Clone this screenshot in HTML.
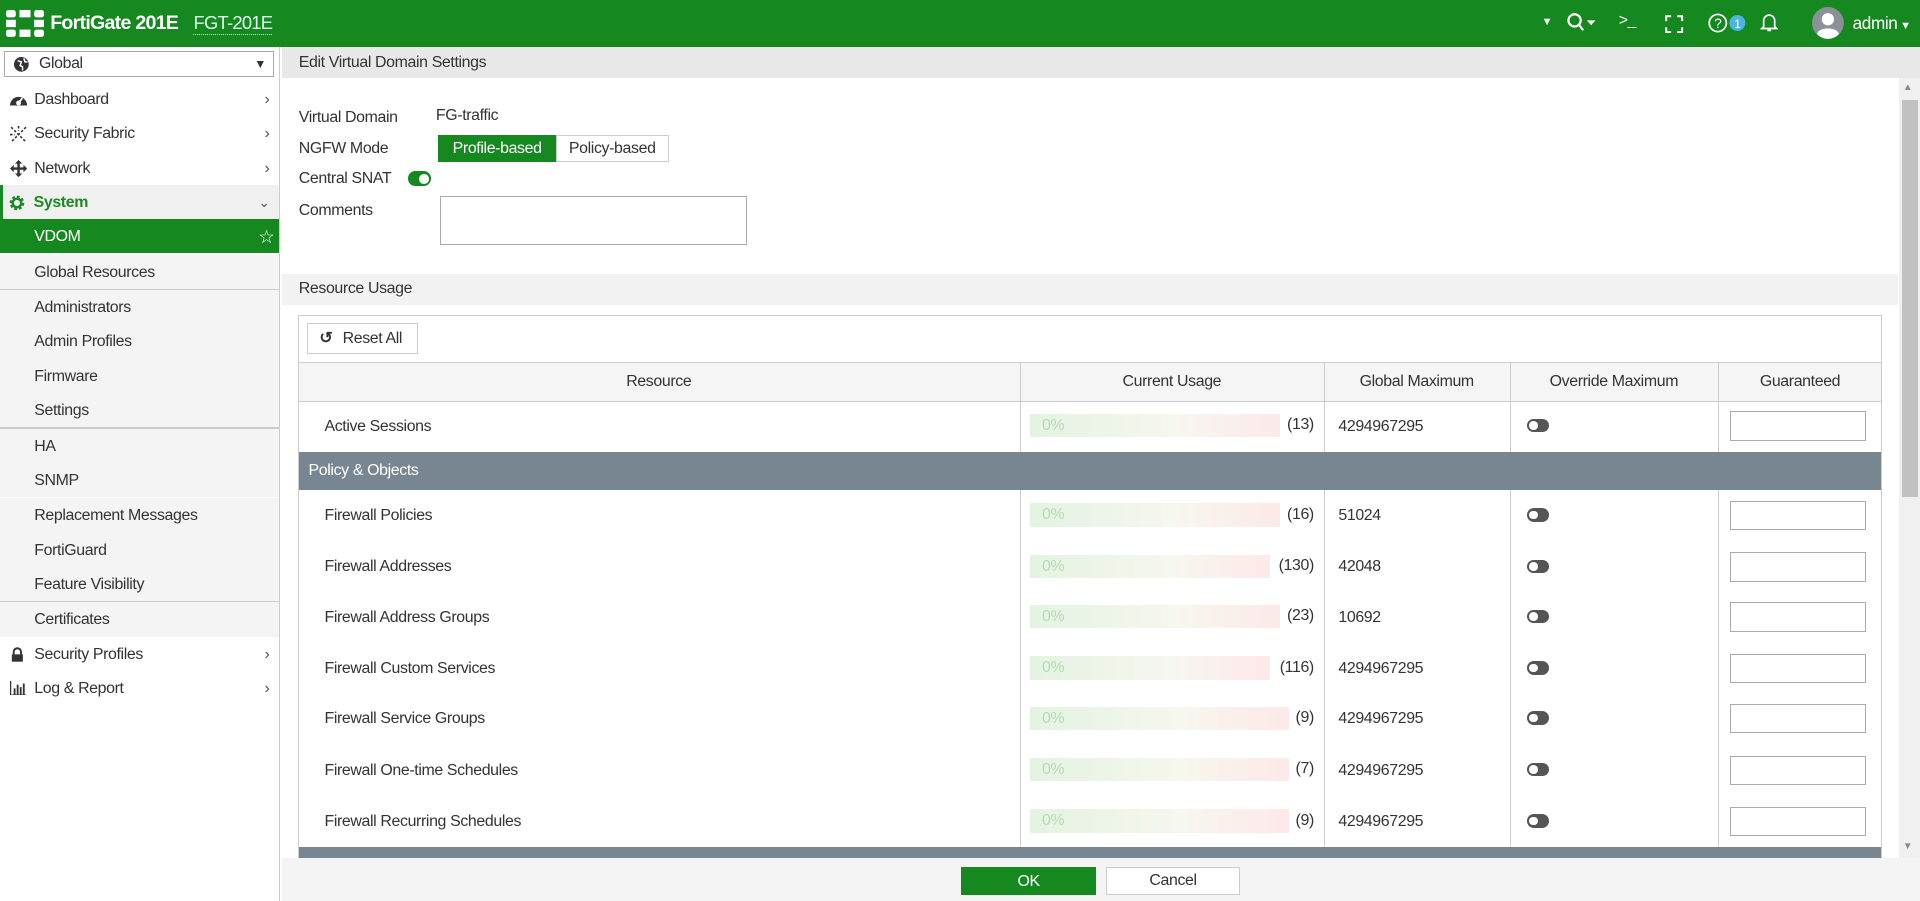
<!DOCTYPE html>
<html><head><meta charset="utf-8"><style>
*{box-sizing:border-box;margin:0;padding:0}
html,body{width:1920px;height:901px;overflow:hidden;background:#fff}
#w{zoom:1.22449;width:1568px;height:736px;position:relative;font-family:"Liberation Sans",sans-serif;font-size:13px;color:#333;letter-spacing:-0.3px}
.a{position:absolute}
#hd{left:0;top:0;width:1568px;height:38px;background:#15891f;color:#fff}
#sb{left:0;top:38px;width:229px;height:698px;border-right:1px solid #ccc;background:#fff}
.mi{position:absolute;left:0;width:228px;height:28px;line-height:30px;padding-left:28px}
.mi svg{position:absolute;left:8px;top:8px}
.ar{position:absolute;right:8px;top:0;color:#555;font-size:13px}
.sub{background:#f4f4f4}
.ln{position:absolute;left:0;width:228px;height:1px;background:#ccc}
.row{position:absolute;left:243px;width:1294px;border-bottom:0}
.nm{position:absolute;left:22px}
.bar{position:absolute;left:598px;height:19px;background:linear-gradient(90deg,#e3f3e2,#f7f7ee 60%,#fde9e8);color:#b5dbb3;font-size:13px;line-height:19px;padding-left:10px}
.cnt{position:absolute;right:464px}
.gm{position:absolute;left:850px}
.tg{position:absolute;left:1004px;width:18px;height:11px;border-radius:6px;background:#555}
.tg:after{content:"";position:absolute;left:2px;top:2px;width:7px;height:7px;border-radius:50%;background:#fff}
.in{position:absolute;left:1170px;width:111px;height:24px;border:1px solid #aaa;background:#fff}
.vl{position:absolute;width:1px;background:#ccc}
</style></head><body><div id="w">
<div id="hd" class="a">
 <svg class="a" style="left:5px;top:8px" width="31" height="22" viewBox="0 0 31 22"><g fill="#fff"><rect x="0" y="0" width="8" height="6" rx="2"/><rect x="11" y="0" width="9" height="6"/><rect x="23" y="0" width="8" height="6" rx="2"/><rect x="0" y="8" width="8" height="6"/><rect x="23" y="8" width="8" height="6"/><rect x="0" y="16" width="8" height="6" rx="2"/><rect x="11" y="16" width="9" height="6"/><rect x="23" y="16" width="8" height="6" rx="2"/></g></svg>
 <div class="a" style="left:41px;top:10px;font-weight:bold;font-size:16px;letter-spacing:-0.6px">FortiGate 201E</div>
 <div class="a" style="left:158px;top:10px;font-size:15px;color:#dfe;border-bottom:1px dotted #cfc;letter-spacing:-0.6px">FGT-201E</div>
 <div class="a" style="left:1259px;top:13px;font-size:9px">▼</div>
 <svg class="a" style="left:1279px;top:11px" width="28" height="16"><circle cx="7" cy="6" r="5" fill="none" stroke="#fff" stroke-width="1.8"/><line x1="10.5" y1="9.5" x2="14" y2="14" stroke="#fff" stroke-width="1.8"/><path d="M17 6h7l-3.5 4z" fill="#fff"/></svg>
 <div class="a" style="left:1322px;top:10px;font-size:13px">&gt;_</div>
 <svg class="a" style="left:1360px;top:12px" width="15" height="15" fill="none" stroke="#fff" stroke-width="1.6"><path d="M1 5V1h4M10 1h4v4M14 10v4h-4M5 14H1v-4"/></svg>
 <svg class="a" style="left:1395px;top:10px" width="32" height="18"><circle cx="8" cy="9" r="7" fill="none" stroke="#fff" stroke-width="1.4"/><text x="8" y="13" font-size="11" fill="#fff" text-anchor="middle" font-family="Liberation Sans">?</text><circle cx="24" cy="9" r="6.5" fill="#4cb4e0"/><text x="24" y="13" font-size="10" fill="#fff" text-anchor="middle" font-family="Liberation Sans">1</text></svg>
 <svg class="a" style="left:1437px;top:10px" width="15" height="17" fill="none" stroke="#fff" stroke-width="1.4"><path d="M3 12V7a4.5 4.5 0 0 1 9 0v5l1.5 1.5h-12zM6 15h3"/></svg>
 <svg class="a" style="left:1480px;top:6px" width="26" height="26"><circle cx="13" cy="13" r="13" fill="#8b9199"/><circle cx="13" cy="10" r="5" fill="#fff"/><path d="M4 22c2-6 16-6 18 0a12 12 0 0 1-18 0z" fill="#fff"/></svg>
 <div class="a" style="left:1513px;top:11px;font-size:14px">admin<span style="font-size:9px"> ▼</span></div>
</div>
<div id="sb" class="a">
 <div class="a" style="left:3px;top:4px;width:221px;height:21px;border:1px solid #aaa;line-height:20px;padding-left:28px">Global<svg class="a" style="left:8px;top:4px" width="12" height="12"><circle cx="6" cy="6" r="6" fill="#333"/><path d="M3 3l3 1-1 3 2 1 0 3M8 1l1 3 2 0" stroke="#fff" fill="none" stroke-width="1.2"/></svg><span class="a" style="right:6px;top:0;font-size:10px">▼</span></div>
 <div class="mi" style="top:29px">Dashboard<svg width="14" height="12"><path d="M0 11a7 7 0 0 1 14 0z" fill="#333"/><circle cx="7" cy="9" r="2" fill="#fff"/><line x1="7" y1="9" x2="10" y2="5" stroke="#fff" stroke-width="1.5"/></svg><span class="ar">›</span></div>
 <div class="mi" style="top:57px">Security Fabric<svg width="14" height="14" stroke="#333" stroke-width="1.3" stroke-dasharray="2 1.5"><path d="M1 1l12 12M13 1L1 13M7 0v4M0 7h4"/></svg><span class="ar">›</span></div>
 <div class="mi" style="top:85px">Network<svg width="14" height="14" fill="#333"><path d="M6 3h2v8H6zM3 6h8v2H3zM7 0l3 3H4zM7 14l3-3H4zM0 7l3-3v6zM14 7l-3-3v6z"/></svg><span class="ar">›</span></div>
 <div class="mi" style="top:113px;background:#f0f0f0;color:#1b8a24;font-weight:bold;border-left:3px solid #1b8a24;padding-left:25px">System<svg style="left:5px" width="13" height="13"><circle cx="6.5" cy="6.5" r="4.5" fill="none" stroke="#1b8a24" stroke-width="3" stroke-dasharray="2 1.5"/><circle cx="6.5" cy="6.5" r="3.5" fill="none" stroke="#1b8a24" stroke-width="2"/></svg><span class="ar" style="font-weight:normal;font-size:11px">⌄</span></div>
 <div class="mi" style="top:141px;background:#15891f;color:#fff">VDOM<span class="a" style="right:4px;top:0;font-size:15px">☆</span></div>
 <div class="mi sub" style="top:170px">Global Resources</div>
 <div class="ln" style="top:198px"></div>
 <div class="mi sub" style="top:199px">Administrators</div>
 <div class="mi sub" style="top:227px">Admin Profiles</div>
 <div class="mi sub" style="top:255px">Firmware</div>
 <div class="mi sub" style="top:283px">Settings</div>
 <div class="ln" style="top:311px"></div>
 <div class="mi sub" style="top:312px">HA</div>
 <div class="mi sub" style="top:340px">SNMP</div>
 <div class="mi sub" style="top:369px">Replacement Messages</div>
 <div class="mi sub" style="top:397px">FortiGuard</div>
 <div class="mi sub" style="top:425px">Feature Visibility</div>
 <div class="ln" style="top:453px"></div>
 <div class="mi sub" style="top:454px">Certificates</div>
 <div class="mi" style="top:482px">Security Profiles<svg width="12" height="13"><path d="M3 6V4a3 3 0 0 1 6 0v2" stroke="#333" stroke-width="1.6" fill="none"/><rect x="1.5" y="6" width="9" height="6" fill="#333"/></svg><span class="ar">›</span></div>
 <div class="mi" style="top:510px">Log &amp; Report<svg width="13" height="12" fill="#333"><path d="M0 0h1v11h13v1H0zM3 6h1.5v5H3zM5.5 3h1.5v8H5.5zM8 5h1.5v6H8zM10.5 2h1.5v9h-1.5z"/></svg><span class="ar">›</span></div>
</div>
<div class="a" style="left:230px;top:38px;width:1338px;height:26px;background:#e8e8e8;padding:6px 14px">Edit Virtual Domain Settings</div>
<div class="a" style="left:244px;top:89px">Virtual Domain</div>
<div class="a" style="left:356px;top:87px">FG-traffic</div>
<div class="a" style="left:244px;top:114px">NGFW Mode</div>
<div class="a" style="left:358px;top:110px;width:96px;height:22px;background:#15891f;color:#fff;line-height:23px;text-align:center">Profile-based</div>
<div class="a" style="left:454px;top:110px;width:92px;height:22px;border:1px solid #ccc;line-height:21px;text-align:center">Policy-based</div>
<div class="a" style="left:244px;top:139px">Central SNAT</div>
<div class="a" style="left:333px;top:140px;width:19px;height:12px;border-radius:6px;background:#15891f"><div class="a" style="left:9px;top:2px;width:8px;height:8px;border-radius:50%;background:#fff"></div></div>
<div class="a" style="left:244px;top:165px">Comments</div>
<div class="a" style="left:359px;top:160px;width:251px;height:40px;border:1px solid #aaa"></div>
<div class="a" style="left:230px;top:224px;width:1320px;height:25px;background:#f2f2f2;padding:5px 14px">Resource Usage</div>
<div class="a" style="left:243px;top:257px;width:1294px;height:445px;border:1px solid #ccc;border-bottom:0"></div>
<div class="a" style="left:251px;top:264px;width:90px;height:25px;border:1px solid #ccc;line-height:24px;padding-left:28px">Reset All<span class="a" style="left:9px;top:0;font-weight:bold">↺</span></div>
<div class="a" style="left:244px;top:296px;width:1292px;height:32px;background:#f5f5f5;border-top:1px solid #ccc;border-bottom:1px solid #ccc"></div>
<div class="a" style="left:243px;top:305px;width:590px;text-align:center">Resource</div>
<div class="a" style="left:833px;top:305px;width:248px;text-align:center">Current Usage</div>
<div class="a" style="left:1081px;top:305px;width:152px;text-align:center">Global Maximum</div>
<div class="a" style="left:1233px;top:305px;width:170px;text-align:center">Override Maximum</div>
<div class="a" style="left:1403px;top:305px;width:134px;text-align:center">Guaranteed</div>
<div class="vl a" style="left:833px;top:296px;height:73px"></div>
<div class="vl a" style="left:1081px;top:296px;height:73px"></div>
<div class="vl a" style="left:1233px;top:296px;height:73px"></div>
<div class="vl a" style="left:1403px;top:296px;height:73px"></div>
<div class="vl a" style="left:833px;top:400px;height:292px"></div>
<div class="vl a" style="left:1081px;top:400px;height:292px"></div>
<div class="vl a" style="left:1233px;top:400px;height:292px"></div>
<div class="vl a" style="left:1403px;top:400px;height:292px"></div>
<div class="row" style="top:327px;height:42px">
 <div class="nm" style="top:14px">Active Sessions</div><div class="bar" style="top:11px;width:204px">0%</div><div class="cnt" style="top:13px">(13)</div><div class="gm" style="top:14px">4294967295</div><div class="tg" style="top:15px"></div><div class="in" style="top:9px"></div>
</div>
<div class="a" style="left:244px;top:369px;width:1292px;height:31px;background:#788692;color:#fff;padding:8px 8px">Policy &amp; Objects</div>
<div class="row" style="top:400px;height:42px"><div class="nm" style="top:14px">Firewall Policies</div><div class="bar" style="top:11px;width:204px">0%</div><div class="cnt" style="top:13px">(16)</div><div class="gm" style="top:14px">51024</div><div class="tg" style="top:15px"></div><div class="in" style="top:9px"></div></div>
<div class="row" style="top:442px;height:42px"><div class="nm" style="top:14px">Firewall Addresses</div><div class="bar" style="top:11px;width:196px">0%</div><div class="cnt" style="top:13px">(130)</div><div class="gm" style="top:14px">42048</div><div class="tg" style="top:15px"></div><div class="in" style="top:9px"></div></div>
<div class="row" style="top:483px;height:42px"><div class="nm" style="top:14px">Firewall Address Groups</div><div class="bar" style="top:11px;width:204px">0%</div><div class="cnt" style="top:13px">(23)</div><div class="gm" style="top:14px">10692</div><div class="tg" style="top:15px"></div><div class="in" style="top:9px"></div></div>
<div class="row" style="top:525px;height:42px"><div class="nm" style="top:14px">Firewall Custom Services</div><div class="bar" style="top:11px;width:196px">0%</div><div class="cnt" style="top:13px">(116)</div><div class="gm" style="top:14px">4294967295</div><div class="tg" style="top:15px"></div><div class="in" style="top:9px"></div></div>
<div class="row" style="top:566px;height:42px"><div class="nm" style="top:14px">Firewall Service Groups</div><div class="bar" style="top:11px;width:212px">0%</div><div class="cnt" style="top:13px">(9)</div><div class="gm" style="top:14px">4294967295</div><div class="tg" style="top:15px"></div><div class="in" style="top:9px"></div></div>
<div class="row" style="top:608px;height:42px"><div class="nm" style="top:14px">Firewall One-time Schedules</div><div class="bar" style="top:11px;width:212px">0%</div><div class="cnt" style="top:13px">(7)</div><div class="gm" style="top:14px">4294967295</div><div class="tg" style="top:15px"></div><div class="in" style="top:9px"></div></div>
<div class="row" style="top:650px;height:42px"><div class="nm" style="top:14px">Firewall Recurring Schedules</div><div class="bar" style="top:11px;width:212px">0%</div><div class="cnt" style="top:13px">(9)</div><div class="gm" style="top:14px">4294967295</div><div class="tg" style="top:15px"></div><div class="in" style="top:9px"></div></div>
<div class="a" style="left:244px;top:692px;width:1292px;height:9px;background:#788692"></div>
<div class="a" style="left:230px;top:701px;width:1338px;height:35px;background:#f4f4f4"></div>
<div class="a" style="left:785px;top:708px;width:110px;height:23px;background:#15891f;color:#fff;text-align:center;line-height:24px">OK</div>
<div class="a" style="left:903px;top:708px;width:110px;height:23px;background:#fff;border:1px solid #ccc;text-align:center;line-height:22px">Cancel</div>
<div class="a" style="left:1551px;top:64px;width:17px;height:637px;background:#f0f0f0"></div>
<div class="a" style="left:1553px;top:82px;width:13px;height:324px;background:#c1c1c1"></div>
<div class="a" style="left:1554px;top:67px;font-size:8px;color:#888">▲</div>
<div class="a" style="left:1554px;top:687px;font-size:8px;color:#888">▼</div>
</div></body></html>
